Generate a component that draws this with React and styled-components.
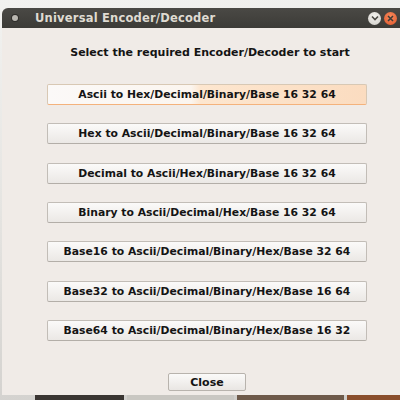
import React from 'react';
import styled, { createGlobalStyle } from 'styled-components';

const GlobalStyle = createGlobalStyle`
  html, body {
    margin: 0;
    padding: 0;
    background: #d9d6d2;
  }
`;

const options = [
  'Ascii to Hex/Decimal/Binary/Base 16 32 64',
  'Hex to Ascii/Decimal/Binary/Base 16 32 64',
  'Decimal to Ascii/Hex/Binary/Base 16 32 64',
  'Binary to Ascii/Decimal/Hex/Base 16 32 64',
  'Base16 to Ascii/Decimal/Binary/Hex/Base 32 64',
  'Base32 to Ascii/Decimal/Binary/Hex/Base 16 64',
  'Base64 to Ascii/Decimal/Binary/Hex/Base 16 32',
];

const App = () => {
  return (
    <>
      <GlobalStyle />
      <Desktop>
        <Window>
          <TitleBar>
            <MenuDot />
            <Title>Universal Encoder/Decoder</Title>
            <Controls>
              <MinBtn>
                <svg width="8" height="6" viewBox="0 0 8 6">
                  <path d="M1 1.5 L4 4.5 L7 1.5" stroke="#4a4944" strokeWidth="1.6" fill="none" />
                </svg>
              </MinBtn>
              <CloseBtn>
                <svg width="7" height="7" viewBox="0 0 7 7">
                  <path d="M1 1 L6 6 M6 1 L1 6" stroke="#3c3b37" strokeWidth="1.5" />
                </svg>
              </CloseBtn>
            </Controls>
          </TitleBar>
          <Body>
            <Heading>Select the required Encoder/Decoder to start</Heading>
            <ButtonList>
              {options.map((label, i) => (
                <OptionButton key={label} hover={i === 0}>{label}</OptionButton>
              ))}
            </ButtonList>
            <Footer>
              <CloseButton>Close</CloseButton>
            </Footer>
          </Body>
        </Window>
        <Wallpaper>
          <Photo color="#3a3532" w={100} />
          <Photo color="#c9c7c2" w={120} />
          <Photo color="#6e5a4a" w={120} />
          <Photo color="#8a4e2c" w={60} />
        </Wallpaper>
      </Desktop>
    </>
  );
};

export default App;

const Desktop = styled.div`
  width: 400px;
  height: 400px;
  overflow: hidden;
  padding: 8px 0 0 2px;
  box-sizing: border-box;
  background: linear-gradient(172deg, #f2f2f0 0%, #e4e3e0 50%, #cfcdca 100%);
  font-family: "DejaVu Sans", "Liberation Sans", sans-serif;
`;

const Window = styled.div`
  width: 410px;
  height: 387px;
  display: flex;
  flex-direction: column;
  background: #f0ebe7;
  border-radius: 6px 6px 0 0;
  overflow: hidden;
`;

const TitleBar = styled.div`
  height: 20px;
  flex: none;
  display: flex;
  align-items: center;
  background: linear-gradient(#4a4945, #3c3b37);
  padding-left: 10px;
`;

const MenuDot = styled.div`
  width: 6px;
  height: 6px;
  border-radius: 50%;
  background: #b9b6b0;
  box-shadow: 0 0 0 1px #2e2d2a;
`;

const Title = styled.div`
  margin-left: 17px;
  color: #dfdbd2;
  font-weight: bold;
  font-size: 11.5px;
  letter-spacing: 0.2px;
`;

const Controls = styled.div`
  margin-left: auto;
  margin-right: 15px;
  display: flex;
  gap: 3px;
  align-items: center;
`;

const MinBtn = styled.div`
  width: 13px;
  height: 13px;
  border-radius: 50%;
  background: radial-gradient(circle at 50% 35%, #f4f3f0, #cfccc6);
  display: flex;
  align-items: center;
  justify-content: center;
`;

const CloseBtn = styled.div`
  width: 13px;
  height: 13px;
  border-radius: 50%;
  background: radial-gradient(circle at 50% 35%, #f78a5c, #e0562b);
  display: flex;
  align-items: center;
  justify-content: center;
`;

const Body = styled.div`
  flex: 1;
  display: flex;
  flex-direction: column;
  padding: 17px 0 0 45px;
  width: 320px;
`;

const Heading = styled.div`
  text-align: center;
  font-weight: bold;
  font-size: 11px;
  color: #141414;
  height: 16px;
  line-height: 16px;
  padding-left: 6px;
`;

const ButtonList = styled.div`
  margin-top: 23px;
  display: flex;
  flex-direction: column;
  gap: 18.33px;
`;

const OptionButton = styled.div`
  height: 21px;
  box-sizing: border-box;
  border: 1px solid ${p => (p.hover ? '#d8c8b4' : '#c2bdb7')};
  border-bottom-color: ${p => (p.hover ? '#f4b27c' : '#b3aea8')};
  border-radius: 2px;
  background: ${p =>
    p.hover
      ? 'linear-gradient(90deg, #fbf9f8 0%, #fbf5ef 45%, #fde6cf 48%, #fbdcc0 100%)'
      : 'linear-gradient(#fbfaf9, #ebe8e5)'};
  display: flex;
  align-items: center;
  justify-content: center;
  font-weight: bold;
  font-size: 10.8px;
  color: #141414;
`;

const Footer = styled.div`
  margin-top: auto;
  margin-bottom: 4px;
  display: flex;
  justify-content: center;
`;

const CloseButton = styled.div`
  width: 78px;
  height: 18px;
  box-sizing: border-box;
  border: 1px solid #b8b3ad;
  border-radius: 2px;
  background: linear-gradient(#fbfaf9, #e9e6e3);
  display: flex;
  align-items: center;
  justify-content: center;
  font-weight: bold;
  font-size: 11px;
  color: #141414;
`;

const Wallpaper = styled.div`
  height: 5px;
  display: flex;
  margin-left: 33px;
  gap: 3px;
`;

const Photo = styled.div`
  width: ${p => p.w}px;
  background: ${p => p.color};
`;
